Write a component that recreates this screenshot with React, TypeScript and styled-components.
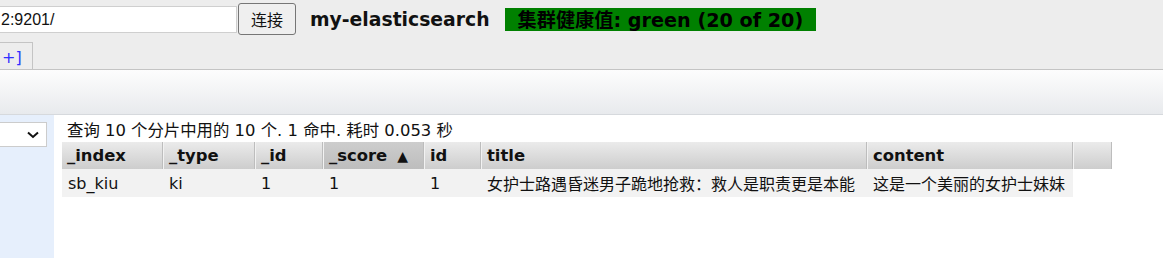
import React from "react";
import styled, { createGlobalStyle } from "styled-components";

const Global = createGlobalStyle`
  html, body { margin: 0; padding: 0; background: #fff; overflow: hidden; }
  body { font-family: "DejaVu Sans", "Noto Sans CJK SC", sans-serif; color: #000; }
`;

const Page = styled.div`
  width: 1163px;
  height: 258px;
  display: flex;
  flex-direction: column;
  overflow: hidden;
`;

const TopArea = styled.div`
  background: #ededed;
  border-bottom: 1px solid #c4c4c4;
`;

const Header = styled.div`
  height: 38px;
  display: flex;
  align-items: center;
`;

const UrlInput = styled.input`
  box-sizing: border-box;
  width: 238px;
  height: 27px;
  margin: 1px 0 0 -1px;
  border: 1px solid #cfcfcf;
  background: #fff;
  padding: 0 0 0 1px;
  font-family: "Liberation Sans", "Noto Sans CJK SC", sans-serif;
  font-size: 16px;
  color: #111;
  outline: none;
`;

const ConnectButton = styled.button`
  box-sizing: border-box;
  width: 58px;
  height: 32px;
  margin-left: 1px;
  border: 1px solid #767676;
  border-radius: 3px;
  background: #efefef;
  font-family: "Noto Sans CJK SC", sans-serif;
  font-size: 16px;
  color: #111;
  padding: 0;
`;

const Title = styled.h1`
  margin: 0 0 0 14px;
  font-size: 18.8px;
  font-weight: bold;
  font-family: "DejaVu Sans", "Noto Sans CJK SC", sans-serif;
  color: #111;
`;

const Health = styled.span<{ $status: string }>`
  box-sizing: border-box;
  margin-left: 15px;
  width: 311px;
  height: 23px;
  display: inline-flex;
  align-items: center;
  padding: 0 0 0 13px;
  background: ${(p) => (p.$status === "green" ? "#008000" : "#ffcc00")};
  font-size: 19.2px;
  font-weight: bold;
  font-family: "DejaVu Sans", "Noto Sans CJK SC", sans-serif;
  color: #000;
  white-space: nowrap;
`;

const TabRow = styled.div`
  height: 31px;
  display: flex;
  align-items: flex-end;
`;

const Tab = styled.div`
  box-sizing: border-box;
  width: 34px;
  height: 27px;
  margin-left: -1px;
  padding: 6px 0 0 2px;
  border: 1px solid #c4c4c4;
  border-bottom: none;
  background: #ededed;
  color: #3030ff;
  font-family: "DejaVu Sans", sans-serif;
  font-size: 16px;
  line-height: 18px;
`;

const Toolbar = styled.div`
  height: 44px;
  background: linear-gradient(#fdfdfd, #e8eaed);
  border-bottom: 1px solid #d6d9dd;
`;

const Main = styled.div`
  flex: 1;
  display: flex;
`;

const Sidebar = styled.div`
  width: 54px;
  background: #e6effc;
  padding-top: 7px;
`;

const SelectBox = styled.div`
  box-sizing: border-box;
  width: 48px;
  height: 25px;
  margin-left: -1px;
  border: 1px solid #cccccc;
  background: #fff;
  display: flex;
  align-items: center;
  justify-content: flex-end;
  padding-right: 7px;
`;

const Content = styled.div`
  flex: 1;
  padding-left: 8px;
`;

const Summary = styled.div`
  margin-top: 6px;
  padding-left: 5px;
  height: 21px;
  line-height: 20px;
  font-size: 16.4px;
  font-family: "DejaVu Sans", "Noto Sans CJK SC", sans-serif;
  color: #111;
  white-space: nowrap;
`;

const Table = styled.table`
  border-collapse: separate;
  border-spacing: 0;
  table-layout: fixed;
  font-family: "DejaVu Sans", "Noto Sans CJK SC", sans-serif;
  font-size: 16px;
`;

const Th = styled.th<{ $sorted?: boolean }>`
  box-sizing: border-box;
  height: 27px;
  padding: 0 0 0 5px;
  text-align: left;
  font-weight: bold;
  font-size: 16.4px;
  color: #111;
  white-space: nowrap;
  border-left: 1px solid #f2f2f2;
  border-right: 1px solid #bdbdbd;
  background: ${(p) =>
    p.$sorted
      ? "linear-gradient(#cdcdcd, #bdbdbd)"
      : "linear-gradient(#ebebeb, #cdcdcd)"};
  &:first-child { border-left: none; }
`;

const Arrow = styled.span`
  margin-left: 10px;
  font-size: 14px;
`;

const Td = styled.td`
  height: 28px;
  padding: 0 0 0 6px;
  background: #f2f2f2;
  color: #111;
  white-space: nowrap;
  overflow: hidden;
`;

const columns = [
  { key: "_index", width: 101 },
  { key: "_type", width: 92 },
  { key: "_id", width: 68 },
  { key: "_score", width: 101, sorted: true },
  { key: "id", width: 57 },
  { key: "title", width: 386 },
  { key: "content", width: 206 },
  { key: "", width: 39 },
];

const row = [
  "sb_kiu",
  "ki",
  "1",
  "1",
  "1",
  "女护士路遇昏迷男子跪地抢救：救人是职责更是本能",
  "这是一个美丽的女护士妹妹",
];

const Chevron = () => (
  <svg width="12" height="8" viewBox="0 0 12 8">
    <path d="M1 1.5 L6 6 L11 1.5" fill="none" stroke="#111" strokeWidth="2" />
  </svg>
);

export default function App() {
  return (
    <Page>
      <Global />
      <TopArea>
        <Header>
          <UrlInput defaultValue="2:9201/" />
          <ConnectButton>连接</ConnectButton>
          <Title>my-elasticsearch</Title>
          <Health $status="green">集群健康值: green (20 of 20)</Health>
        </Header>
        <TabRow>
          <Tab>+]</Tab>
        </TabRow>
      </TopArea>
      <Toolbar />
      <Main>
        <Sidebar>
          <SelectBox>
            <Chevron />
          </SelectBox>
        </Sidebar>
        <Content>
          <Summary>查询 10 个分片中用的 10 个. 1 命中. 耗时 0.053 秒</Summary>
          <Table>
            <colgroup>
              {columns.map((c, i) => (
                <col key={i} style={{ width: c.width }} />
              ))}
            </colgroup>
            <thead>
              <tr>
                {columns.map((c, i) => (
                  <Th key={i} $sorted={c.sorted}>
                    {c.key}
                    {c.sorted && <Arrow>▲</Arrow>}
                  </Th>
                ))}
              </tr>
            </thead>
            <tbody>
              <tr>
                {row.map((v, i) => (
                  <Td key={i}>{v}</Td>
                ))}
              </tr>
            </tbody>
          </Table>
        </Content>
      </Main>
    </Page>
  );
}
